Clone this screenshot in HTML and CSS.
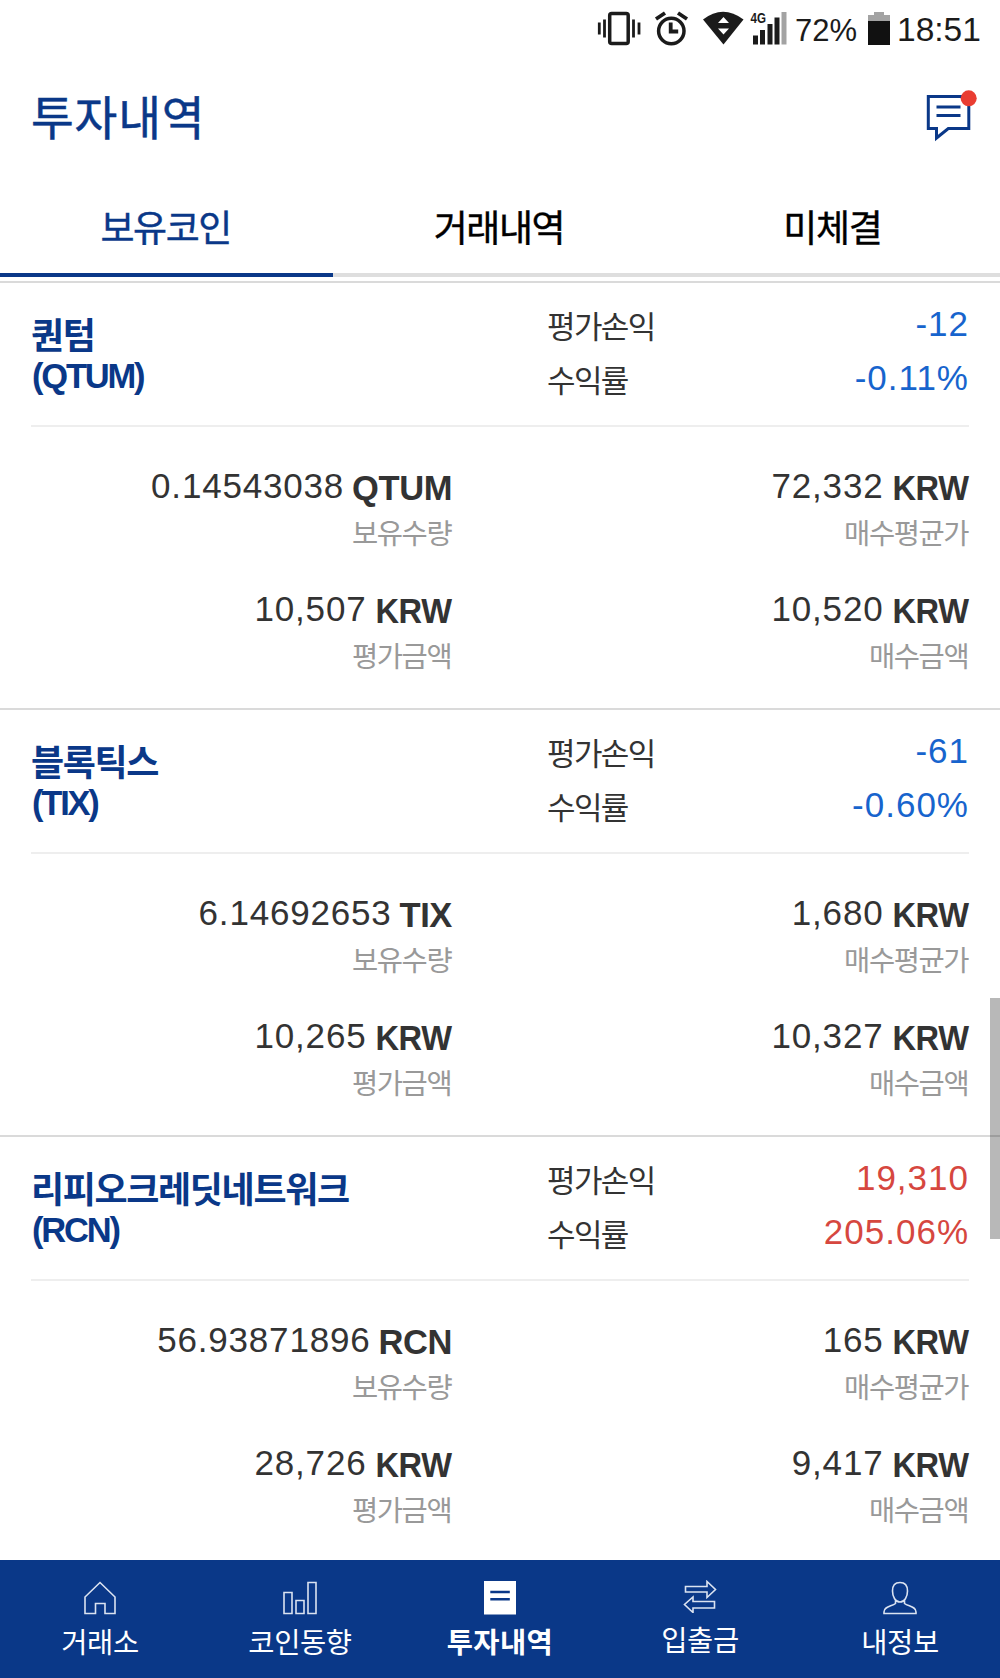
FILE: index.html
```html
<!DOCTYPE html>
<html lang="ko">
<head>
<meta charset="utf-8">
<title>투자내역</title>
<link rel="stylesheet" href="styles.css">
</head>
<body>
<div class="screen">
  <div class="statusbar">
    <svg class="status-icons" width="210" height="56" viewBox="580 0 210 56">
      <rect x="609.700" y="13.500" width="18.500" height="30" rx="2" fill="none" stroke="#1b1b1b" stroke-width="3.500"/>
      <path d="M599.300 22.500v12M604.500 19.500v18M633.500 19.500v18M639 22.500v12" stroke="#1b1b1b" stroke-width="2.800"/>
      <circle cx="671.300" cy="31" r="12.700" fill="none" stroke="#1b1b1b" stroke-width="3.500"/>
      <path d="M670.700 22.500v9h7.500M656 19l9-6M687 19l-9-6" fill="none" stroke="#1b1b1b" stroke-width="3.800"/>
      <path d="M703 19.500Q723 4 743.500 19.500L723.500 44.500z" fill="#1b1b1b"/>
      <path d="M723.500 17l5.500 6h-11zM718 28.500h11l-5.500 6z" fill="#fff"/>
      <text class="net" x="750.500" y="23" textLength="15.500" lengthAdjust="spacingAndGlyphs">4G</text>
      <path d="M753 35.500h5v9h-5zM760 30h5v14.500h-5zM767.500 24h5v20.500h-5zM774.500 17.500h5v27h-5z" fill="#1b1b1b"/>
      <path d="M781.500 12h5v32.500h-5z" fill="#a3a3a3"/>
    </svg>
    <span class="battery-text">72%</span>
    <svg class="battery" width="22" height="56" viewBox="0 0 22 56">
      <path d="M6 12h10v3h6v6H0v-6h6z" fill="#a3a3a3"/><path d="M0 21h22v24H0z" fill="#111"/>
    </svg>
    <span class="clock">18:51</span>
  </div>
  <header class="header">
    <h1 class="title">투자내역</h1>
    <svg class="message" width="54" height="54" viewBox="925 88 54 54">
      <path d="M928.300 96.500h40.500v32h-20.500l-11.800 9.500v-9.500h-8.200z" fill="none" stroke="#0a3888" stroke-width="3"/>
      <path d="M936.500 107h24M936.500 115.500h24" stroke="#0a3888" stroke-width="3"/>
      <circle cx="968.700" cy="98.300" r="8" fill="#e93d32"/>
    </svg>
  </header>
  <nav class="tabs">
    <a class="tab tab-active">보유코인</a><a class="tab">거래내역</a><a class="tab">미체결</a>
  </nav>
  <main class="list">
    <section class="card">
      <div class="summary">
        <h2 class="name">퀀텀<span class="code">(QTUM)</span></h2>
        <div class="labels"><span>평가손익</span><span>수익률</span></div>
        <div class="gains down"><span>-12</span><span>-0.11%</span></div>
      </div>
      <div class="grid">
        <div class="cell"><p class="amount">0.14543038<b>QTUM</b></p><p class="caption">보유수량</p></div>
        <div class="cell"><p class="amount">72,332<b class="krw">KRW</b></p><p class="caption">매수평균가</p></div>
        <div class="cell"><p class="amount">10,507<b class="krw">KRW</b></p><p class="caption">평가금액</p></div>
        <div class="cell"><p class="amount">10,520<b class="krw">KRW</b></p><p class="caption">매수금액</p></div>
      </div>
    </section>
    <section class="card">
      <div class="summary">
        <h2 class="name">블록틱스<span class="code">(TIX)</span></h2>
        <div class="labels"><span>평가손익</span><span>수익률</span></div>
        <div class="gains down"><span>-61</span><span>-0.60%</span></div>
      </div>
      <div class="grid">
        <div class="cell"><p class="amount">6.14692653<b>TIX</b></p><p class="caption">보유수량</p></div>
        <div class="cell"><p class="amount">1,680<b class="krw">KRW</b></p><p class="caption">매수평균가</p></div>
        <div class="cell"><p class="amount">10,265<b class="krw">KRW</b></p><p class="caption">평가금액</p></div>
        <div class="cell"><p class="amount">10,327<b class="krw">KRW</b></p><p class="caption">매수금액</p></div>
      </div>
    </section>
    <section class="card">
      <div class="summary">
        <h2 class="name">리피오크레딧네트워크<span class="code">(RCN)</span></h2>
        <div class="labels"><span>평가손익</span><span>수익률</span></div>
        <div class="gains up"><span>19,310</span><span>205.06%</span></div>
      </div>
      <div class="grid">
        <div class="cell"><p class="amount">56.93871896<b>RCN</b></p><p class="caption">보유수량</p></div>
        <div class="cell"><p class="amount">165<b class="krw">KRW</b></p><p class="caption">매수평균가</p></div>
        <div class="cell"><p class="amount">28,726<b class="krw">KRW</b></p><p class="caption">평가금액</p></div>
        <div class="cell"><p class="amount">9,417<b class="krw">KRW</b></p><p class="caption">매수금액</p></div>
      </div>
    </section>
    <div class="scrollbar"></div>
  </main>
  <nav class="bottom">
    <a class="item"><svg class="icon" width="34" height="34" viewBox="0 0 34 34"><path d="M2 32.500V16L17 1.500 32 16v16.500H22v-10h-9.500v10z"/></svg>거래소</a>
    <a class="item"><svg class="icon" width="34" height="34" viewBox="0 0 34 34"><path d="M1 11.500h8v21H1zM13 19.500h8v13h-8zM25 1.500h8v31h-8z"/></svg>코인동향</a>
    <a class="item item-active"><svg class="icon" width="34" height="34" viewBox="0 0 34 34"><path class="sheet" d="M1 0h32v33.500H1z"/><path class="rule" d="M7.300 11h19.500M7.300 18.200h19.500"/></svg>투자내역</a>
    <a class="item"><svg class="icon icon-swap" width="34" height="33" viewBox="0 0 34 33"><path d="M2.500 6.500h21.500V1.500l8.500 8-8.500 8v-5.500H2.500zM31.500 21.500H10V17l-8.500 7.500L10 32.500V28h21.500z"/></svg>입출금</a>
    <a class="item"><svg class="icon" width="34" height="34" viewBox="0 0 34 34"><path d="M17 1.500C11.500 1.500 9.500 5 9.500 10c0 6 3 11 7.500 11s7.500-5 7.500-11c0-5-2-8.500-7.500-8.500zM12.500 18.500v4C9 25.500 1 25 1 31v1.500h32V31c0-6-8-5.500-11.500-8.500v-4"/></svg>내정보</a>
  </nav>
</div>
</body>
</html>
```
FILE: styles.css
```css
* { box-sizing: border-box; margin: 0; padding: 0; }
body { background: #fff; }
.screen {
  display: flex;
  flex-direction: column;
  width: 1000px;
  height: 1678px;
  overflow: hidden;
  font-family: "Noto Sans CJK KR", sans-serif;
  color: #333;
}
.statusbar {
  display: flex;
  height: 56px;
  padding-left: 580px;
  font-family: "Liberation Sans", sans-serif;
  line-height: 61px;
  color: #1b1b1b;
}
.net { font: bold 14.5px "Liberation Sans", sans-serif; fill: #1b1b1b; }
.battery-text { width: 78px; padding-left: 5px; font-size: 31px; }
.clock { padding-left: 7px; font-size: 33.5px; line-height: 60px; }
.header {
  display: flex;
  align-items: center;
  justify-content: space-between;
  height: 124px;
  padding: 0 21px 0 31px;
}
.title {
  font-size: 46.5px;
  font-weight: 400;
  line-height: 60px;
  letter-spacing: 0.8px;
  color: #0a3888;
  margin-bottom: 6px;
  -webkit-text-stroke: 0.5px;
}
.message { margin-bottom: 6px; }
.tabs { display: grid; grid-template-columns: repeat(3, 1fr); height: 97px; }
.tab {
  border-bottom: 4px solid #dedede;
  padding-right: 2px;
  text-align: center;
  font-size: 37px;
  font-weight: 400;
  line-height: 92px;
  letter-spacing: -1.4px;
  color: #000;
  -webkit-text-stroke: 0.4px;
}
.tab-active { border-color: #0a3888; color: #0a3888; }
.list { position: relative; height: 1283px; padding-top: 4px; overflow: hidden; }
.card { height: 427px; border-top: 2px solid #dadada; padding: 0 31px; }
.summary {
  display: grid;
  grid-template-columns: 516px 150px 1fr;
  height: 144px;
  border-bottom: 2px solid #eee;
}
.name {
  display: flex;
  flex-direction: column;
  padding-top: 30px;
  font-size: 36px;
  font-weight: 700;
  line-height: 40px;
  letter-spacing: -1.35px;
  white-space: nowrap;
  color: #0a3888;
}
.code {
  padding-top: 3px;
  padding-left: 1px;
  font-family: "Liberation Sans", sans-serif;
  font-size: 34.5px;
  letter-spacing: -2.2px;
}
.labels, .gains { display: flex; flex-direction: column; line-height: 54px; }
.labels { padding-top: 15px; font-size: 31px; letter-spacing: -1.6px; }
.gains {
  padding-top: 14px;
  text-align: right;
  font: 35px/54px "Liberation Sans", sans-serif;
  letter-spacing: 1px;
}
.down { color: #1764cd; }
.up { color: #d6473f; }
.grid {
  display: grid;
  grid-template-columns: 421px 1fr;
  row-gap: 37px;
  padding-top: 37px;
}
.cell { display: flex; flex-direction: column; gap: 6px; text-align: right; }
.amount {
  display: flex;
  justify-content: flex-end;
  gap: 8px;
  height: 44px;
  font: 35px/44px "Liberation Sans", sans-serif;
  letter-spacing: 0.8px;
}
.amount b { padding-top: 2px; font-size: 34.5px; letter-spacing: -0.4px; }
.amount .krw { margin-left: -3px; letter-spacing: -0.4px; transform: scaleX(0.945); transform-origin: right; }
.caption { padding-right: 0.8px; font-size: 28.5px; line-height: 36px; letter-spacing: -1.4px; color: #999; }
.scrollbar {
  position: absolute;
  right: 0;
  top: 721px;
  width: 10px;
  height: 241px;
  background: rgba(0, 0, 0, 0.28);
}
.bottom {
  display: grid;
  grid-template-columns: repeat(5, 1fr);
  height: 118px;
  background: #0a3888;
  color: #fff;
}
.item {
  display: flex;
  flex-direction: column;
  align-items: center;
  padding-top: 21px;
  font-size: 28.5px;
  line-height: 40px;
  letter-spacing: -0.4px;
}
.item-active { font-weight: 700; letter-spacing: 0.4px; }
.icon { margin-bottom: 6px; fill: none; stroke: #dbe3f1; stroke-width: 1.6; }
.icon-swap { margin-top: -1px; }
.sheet { fill: #fff; stroke: none; }
.rule { stroke: #0a3888; stroke-width: 2.4; }
```
